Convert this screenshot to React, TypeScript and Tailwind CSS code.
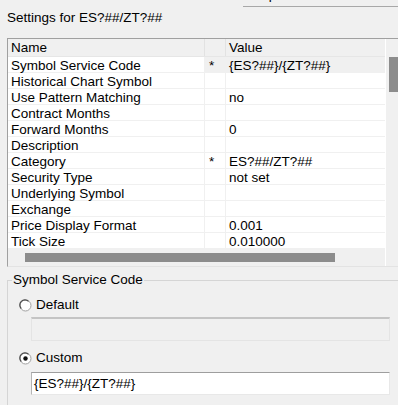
const rows: { name: string; star?: boolean; value?: string }[] = [
  { name: 'Symbol Service Code', star: true, value: '{ES?##}/{ZT?##}' },
  { name: 'Historical Chart Symbol' },
  { name: 'Use Pattern Matching', value: 'no' },
  { name: 'Contract Months' },
  { name: 'Forward Months', value: '0' },
  { name: 'Description' },
  { name: 'Category', star: true, value: 'ES?##/ZT?##' },
  { name: 'Security Type', value: 'not set' },
  { name: 'Underlying Symbol' },
  { name: 'Exchange' },
  { name: 'Price Display Format', value: '0.001' },
  { name: 'Tick Size', value: '0.010000' },
];

const Radio = ({ checked }: { checked?: boolean }) => (
  <svg width="13" height="13" viewBox="0 0 13 13" className="shrink-0">
    <circle cx="6.5" cy="6.5" r="5.5" fill="#fff" stroke="#a0a0a0" />
    <path d="M2.3 9.5 A5 5 0 0 1 9.5 2.3" fill="none" stroke="#4a4a4a" strokeWidth="1.2" />
    {checked && <circle cx="6.5" cy="6.5" r="2.2" fill="#111" />}
  </svg>
);

const App = () => {
  return (
    <div className="w-[398px] h-[405px] overflow-hidden bg-[#f0f0f0] text-black text-[13.5px] font-['Liberation_Sans',Arial,sans-serif]">
      {/* field cut off at the top, only a descender shows */}
      <div className="h-[7px] ml-[243px] border-b border-[#a8a8a8] overflow-hidden">
        <div className="pl-[7px] leading-[16px] -mt-[13px]">Map</div>
      </div>

      <div className="h-[31px] pl-[7px] pt-[3px] leading-[16px]">Settings for ES?##/ZT?##</div>

      {/* property grid */}
      <div className="ml-[7px] w-[395px] h-[229px] flex bg-white border-t border-l border-b border-t-[#a0a0a0] border-l-[#a0a0a0] border-b-[#e3e3e3]">
        <div className="w-[377px] flex flex-col">
          <div className="h-[18px] flex bg-[#f0f0f0] border-b border-[#e6e6e6] leading-[17px]">
            <div className="w-[197px] pl-[3px] border-r border-[#e2e2e2]">Name</div>
            <div className="w-[21px] border-r border-[#e2e2e2]" />
            <div className="flex-1 pl-[3px]">Value</div>
          </div>
          {rows.map((r, i) => (
            <div key={r.name} className="h-[16px] flex leading-[16px] border-b border-[#f0f0f0]">
              <div className="w-[197px] pl-[3px] pt-[1px] border-r border-[#f0f0f0] whitespace-nowrap">{r.name}</div>
              <div
                className={`w-[21px] pl-[4px] pt-[1px] border-r border-[#f0f0f0] ${i === 0 ? 'bg-[#f0f0f0]' : ''}`}
              >
                {r.star ? '*' : ''}
              </div>
              <div className={`flex-1 pl-[3px] pt-[1px] whitespace-nowrap ${i === 0 ? 'bg-[#f0f0f0]' : ''}`}>
                {r.value}
              </div>
            </div>
          ))}
          <div className="h-[17px] bg-[#f0f0f0] pt-[4px]">
            <div className="ml-[17px] w-[310px] h-[9px] bg-[#8c8c8c]" />
          </div>
        </div>
        <div className="w-[17px] bg-[#f0f0f0] border-l border-white pt-[18px]">
          <div className="ml-[3px] w-[9px] h-[35px] bg-[#8c8c8c]" />
        </div>
      </div>

      {/* group box */}
      <div className="relative mt-[13px] ml-[7px] h-[200px] border-t border-l border-[#d5d5d5]">
        <div className="absolute -top-[9px] left-[4px] px-[1px] leading-[16px] bg-[#f0f0f0]">Symbol Service Code</div>
        <div className="pt-[16px] pl-[11px] flex flex-col">
          <div className="h-[16px] flex items-center gap-[4px]">
            <Radio />
            <span className="leading-[16px]">Default</span>
          </div>
          <div className="mt-[4px] ml-[12px] w-[359px] h-[24px] bg-[#f0f0f0] border border-[#e4e4e4] border-t-[#c4c4c4] border-t-2" />
          <div className="mt-[9px] h-[16px] flex items-center gap-[4px]">
            <Radio checked />
            <span className="leading-[16px]">Custom</span>
          </div>
          <div className="mt-[6px] ml-[12px] w-[359px] h-[23px] bg-white border border-[#e8e8e8] border-t-[#9e9e9e] border-l-[#b5b5b5] pl-[2px] leading-[21px]">
            {'{ES?##}/{ZT?##}'}
          </div>
        </div>
      </div>
    </div>
  );
};

export default App;
